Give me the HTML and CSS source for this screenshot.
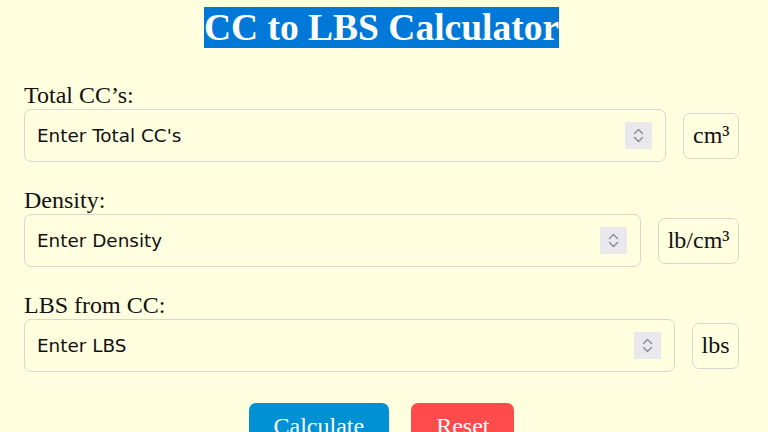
FILE: index.html
```html
<!DOCTYPE html>
<html lang="en">
<head>
<meta charset="utf-8">
<title>CC to LBS Calculator</title>
<link rel="stylesheet" href="styles.css">
</head>
<body>
<div class="container">
  <h1 class="title"><span class="title-text">CC to LBS Calculator</span></h1>

  <div class="group first">
    <label class="label" for="cc">Total CC’s:</label>
    <div class="row">
      <div class="field">
        <input id="cc" class="input" type="text" placeholder="Enter Total CC's">
        <span class="spin"><svg width="27" height="27" viewBox="0 0 27 27"><path d="M9.5 11.5 L13.5 7.5 L17.5 11.5" fill="none" stroke="#8a8a94" stroke-width="1.4" stroke-linecap="round" stroke-linejoin="round"/><path d="M9.5 15.5 L13.5 19.5 L17.5 15.5" fill="none" stroke="#8a8a94" stroke-width="1.4" stroke-linecap="round" stroke-linejoin="round"/></svg></span>
      </div>
      <div class="unit">cm³</div>
    </div>
  </div>

  <div class="group">
    <label class="label" for="density">Density:</label>
    <div class="row">
      <div class="field">
        <input id="density" class="input" type="text" placeholder="Enter Density">
        <span class="spin"><svg width="27" height="27" viewBox="0 0 27 27"><path d="M9.5 11.5 L13.5 7.5 L17.5 11.5" fill="none" stroke="#8a8a94" stroke-width="1.4" stroke-linecap="round" stroke-linejoin="round"/><path d="M9.5 15.5 L13.5 19.5 L17.5 15.5" fill="none" stroke="#8a8a94" stroke-width="1.4" stroke-linecap="round" stroke-linejoin="round"/></svg></span>
      </div>
      <div class="unit">lb/cm³</div>
    </div>
  </div>

  <div class="group">
    <label class="label" for="lbs">LBS from CC:</label>
    <div class="row">
      <div class="field">
        <input id="lbs" class="input" type="text" placeholder="Enter LBS">
        <span class="spin"><svg width="27" height="27" viewBox="0 0 27 27"><path d="M9.5 11.5 L13.5 7.5 L17.5 11.5" fill="none" stroke="#8a8a94" stroke-width="1.4" stroke-linecap="round" stroke-linejoin="round"/><path d="M9.5 15.5 L13.5 19.5 L17.5 15.5" fill="none" stroke="#8a8a94" stroke-width="1.4" stroke-linecap="round" stroke-linejoin="round"/></svg></span>
      </div>
      <div class="unit">lbs</div>
    </div>
  </div>

  <div class="buttons">
    <button class="btn btn-calc" type="button">Calculate</button>
    <button class="btn btn-reset" type="button">Reset</button>
  </div>
</div>
</body>
</html>
```

FILE: styles.css
```css
html, body {
  margin: 0;
  padding: 0;
  background: #ffffe0;
}

.container {
  padding: 7px 29px 0 24px;
  font-family: "Liberation Serif", "Times New Roman", serif;
  color: #111;
}

.title {
  margin: 0;
  text-align: center;
  font-size: 37.5px;
  line-height: 41px;
  font-weight: bold;
}

.title-text {
  background: #0078d7;
  color: #fff;
}

.group {
  margin-top: 25px;
}

.group.first {
  margin-top: 34px;
}

.label {
  display: block;
  font-size: 24px;
  line-height: 27px;
  margin-bottom: 0;
}

.row {
  display: flex;
  align-items: center;
  gap: 17px;
}

.field {
  flex: 1;
  height: 53px;
  box-sizing: border-box;
  border: 1px solid #d6d6d0;
  border-radius: 7px;
  display: flex;
  align-items: center;
  padding: 0 13px 0 12px;
}

.input {
  flex: 1;
  min-width: 0;
  border: none;
  outline: none;
  background: transparent;
  padding: 0;
  font-family: "DejaVu Sans", Verdana, sans-serif;
  font-size: 18.4px;
  color: #111;
}

.input::placeholder {
  color: #111;
  opacity: 1;
}

.spin {
  width: 27px;
  height: 27px;
  background: #e9e9ed;
  display: flex;
}

.unit {
  height: 46px;
  box-sizing: border-box;
  border: 1px solid #d6d6d0;
  border-radius: 7px;
  padding: 0 8.5px;
  display: flex;
  align-items: center;
  font-size: 24px;
}

.buttons {
  display: flex;
  justify-content: center;
  gap: 22px;
  margin-top: 31px;
}

.btn {
  border: none;
  border-radius: 7px;
  padding: 10px 25px;
  font-family: "Liberation Serif", "Times New Roman", serif;
  font-size: 24px;
  line-height: 27px;
  color: #fff;
}

.btn-calc {
  background: #0091d5;
}

.btn-reset {
  background: #ff4b4b;
}
```
